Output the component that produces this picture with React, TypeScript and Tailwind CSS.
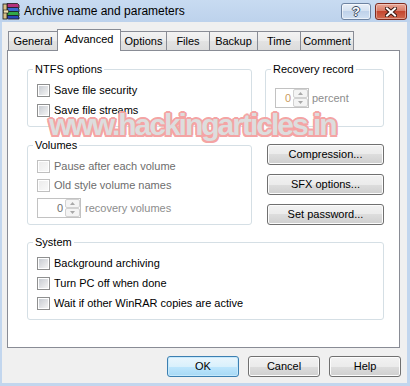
import React from 'react';

const btnCls =
  'flex items-center justify-center rounded-[3px] border border-[#707070] bg-[linear-gradient(#f2f2f2,#ebebeb_50%,#dddddd_50%,#cfcfcf)] shadow-[inset_0_0_0_1px_#fcfcfc] text-[11px] leading-[13px] text-black whitespace-nowrap';

function RarIcon() {
  return (
    <svg width="18" height="18" viewBox="0 0 18 18">
      <path d="M5 1.5 L15.5 1.5 L17 3 L17 6 L6.5 6 L5 4.5 Z" fill="#b4307a" stroke="#1a1a1a" strokeWidth="0.8" />
      <path d="M5 5.5 L15.5 5.5 L17 7 L17 10 L6.5 10 L5 8.5 Z" fill="#3a6ad0" stroke="#1a1a1a" strokeWidth="0.8" />
      <path d="M5 9.5 L15.5 9.5 L17 11 L17 14 L6.5 14 L5 12.5 Z" fill="#32a848" stroke="#1a1a1a" strokeWidth="0.8" />
      <path d="M5 13.5 L15.5 13.5 L17 15 L17 17 L6.5 17 L5 16 Z" fill="#2a48b8" stroke="#1a1a1a" strokeWidth="0.8" />
      <rect x="1" y="2" width="4" height="15" fill="#d8c088" stroke="#1a1a1a" strokeWidth="0.8" />
      <rect x="1.5" y="8" width="5" height="3" fill="#f0e0b0" stroke="#1a1a1a" strokeWidth="0.6" />
    </svg>
  );
}

function Check({ label, disabled }: { label: string; disabled?: boolean }) {
  return (
    <div className="flex items-center h-[13px]">
      <span
        className={`w-[13px] h-[13px] shrink-0 border p-[1px] bg-white ${
          disabled ? 'border-[#c0c0c0]' : 'border-[#8e8f8f]'
        }`}
      >
        <span
          className={`block w-full h-full ${
            disabled
              ? 'bg-[linear-gradient(135deg,#ececec,#f8f8f8)]'
              : 'bg-[linear-gradient(135deg,#c8ccd2,#f4f4f4)]'
          }`}
        />
      </span>
      <span
        className={`ml-[4px] text-[11px] leading-[13px] whitespace-nowrap ${
          disabled ? 'text-[#6d6d6d]' : 'text-black'
        }`}
      >
        {label}
      </span>
    </div>
  );
}

function Arrow({ up }: { up?: boolean }) {
  return (
    <svg width="5" height="3" viewBox="0 0 5 3">
      <path d={up ? 'M0 3 L2.5 0 L5 3 Z' : 'M0 0 L5 0 L2.5 3 Z'} fill="#a8a8a8" />
    </svg>
  );
}

function Spin({ wide, valueColor }: { wide?: boolean; valueColor: string }) {
  return (
    <div
      className={`flex h-[20px] border border-[#c2c2c2] bg-white ${wide ? 'w-[44px]' : 'w-[34px]'}`}
    >
      <span className={`flex-1 text-right pr-[2px] text-[11px] leading-[18px] ${valueColor}`}>0</span>
      <div className="w-[15px] flex flex-col">
        <div className="h-[9px] flex items-center justify-center border border-[#d2d2d2] rounded-[2px] bg-[#f4f4f4]">
          <Arrow up />
        </div>
        <div className="h-[9px] flex items-center justify-center border border-[#d2d2d2] rounded-[2px] bg-[#f4f4f4]">
          <Arrow />
        </div>
      </div>
    </div>
  );
}

function Group({
  title,
  className,
  children,
}: {
  title: string;
  className: string;
  children: React.ReactNode;
}) {
  return (
    <div className={`relative border border-[#d5dfe5] rounded-[3px] ${className}`}>
      <span className="absolute -top-[7px] left-[5px] px-[2px] bg-white text-[11px] leading-[13px] text-black whitespace-nowrap">
        {title}
      </span>
      {children}
    </div>
  );
}

const tabs = [
  { name: 'General', w: 'w-[50px]' },
  { name: 'Advanced', w: 'w-[64px]', active: true },
  { name: 'Options', w: 'w-[47px]' },
  { name: 'Files', w: 'w-[44px]' },
  { name: 'Backup', w: 'w-[49px]' },
  { name: 'Time', w: 'w-[44px]' },
  { name: 'Comment', w: 'w-[54px]' },
];

export default function App() {
  return (
    <div className="relative w-[410px] h-[386px] bg-[#c2d6ee] flex flex-col [font-family:'Liberation_Sans',Arial,sans-serif] overflow-hidden">
      {/* title bar */}
      <div className="h-[22px] flex items-start bg-[linear-gradient(#c8dbf1,#bdd2ec)]">
        <div className="ml-[2px] mt-[2px]">
          <RarIcon />
        </div>
        <span className="ml-[4px] text-[12px] leading-[22px] text-black">Archive name and parameters</span>
        <div className="ml-auto mt-[3px] w-[30px] h-[17px] rounded-[3px] border border-[#6d83a1] bg-[linear-gradient(#e8eff8,#d5e2f1_45%,#bfd2ea_50%,#d0e0f2)] shadow-[inset_0_0_0_1px_rgba(255,255,255,0.6)] flex items-center justify-center text-[13px] leading-[13px] font-bold text-white [text-shadow:1px_0_#3b4a60,-1px_0_#3b4a60,0_1px_#3b4a60,0_-1px_#3b4a60]">
          ?
        </div>
        <div className="ml-[4px] mr-[3px] mt-[3px] w-[32px] h-[17px] rounded-[3px] border border-[#7e2a1e] bg-[linear-gradient(#eaa898,#d87c68_45%,#c4462f_50%,#d06a50)] shadow-[inset_0_0_0_1px_rgba(255,255,255,0.35)] flex items-center justify-center">
          <svg width="12" height="10" viewBox="0 0 12 10">
            <path d="M2 1.5 L10 8.5 M10 1.5 L2 8.5" stroke="#3a1710" strokeWidth="4" strokeLinecap="square" />
            <path d="M2 1.5 L10 8.5 M10 1.5 L2 8.5" stroke="#ffffff" strokeWidth="2" strokeLinecap="square" />
          </svg>
        </div>
      </div>

      {/* body */}
      <div className="flex-1 ml-[2px] mr-[3px] mb-[3px] bg-[#f0f0f0] flex flex-col">
        {/* tabs */}
        <div className="pl-[6px] pt-[7px] h-[28px] flex items-end">
          {tabs.map((t, i) =>
            t.active ? (
              <div
                key={t.name}
                className={`relative z-10 -ml-px -mb-px h-[22px] ${t.w} border border-b-0 border-[#898c95] bg-white pt-[3px] text-center text-[11px] leading-[13px] text-black`}
              >
                {t.name}
              </div>
            ) : (
              <div
                key={t.name}
                className={`${i === 0 ? '' : '-ml-px'} h-[19px] ${t.w} border border-b-0 border-[#898c95] bg-[linear-gradient(#f3f3f3,#ebebeb_50%,#e3e3e3_50%,#dcdcdc)] pt-[3px] text-center text-[11px] leading-[13px] text-black`}
              >
                {t.name}
              </div>
            )
          )}
        </div>

        {/* panel */}
        <div className="ml-[5px] w-[393px] h-[298px] border border-[#898c95] bg-white pt-[18px] pl-[19px] flex flex-col">
          <div className="flex">
            <Group title="NTFS options" className="w-[225px] h-[58px] pt-[14px] pl-[9px] flex flex-col gap-[7px]">
              <Check label="Save file security" />
              <Check label="Save file streams" />
            </Group>
            <Group title="Recovery record" className="ml-[13px] w-[119px] h-[58px] pt-[18px] pl-[9px]">
              <div className="flex items-center">
                <Spin valueColor="text-[#c99a62]" />
                <span className="ml-[3px] text-[11px] leading-[13px] text-[#8d8d8d]">percent</span>
              </div>
            </Group>
          </div>

          <div className="flex mt-[18px]">
            <Group title="Volumes" className="w-[225px] h-[80px] pt-[14px] pl-[9px] flex flex-col gap-[6px]">
              <Check label="Pause after each volume" disabled />
              <Check label="Old style volume names" disabled />
              <div className="flex items-center">
                <Spin wide valueColor="text-[#6d6d6d]" />
                <span className="ml-[4px] text-[11px] leading-[13px] text-[#8d8d8d]">recovery volumes</span>
              </div>
            </Group>
            <div className="ml-[15px] -mt-px w-[117px] flex flex-col gap-[9px]">
              <div className={`${btnCls} h-[21px]`}>Compression...</div>
              <div className={`${btnCls} h-[21px]`}>SFX options...</div>
              <div className={`${btnCls} h-[21px]`}>Set password...</div>
            </div>
          </div>

          <Group title="System" className="mt-[17px] w-[357px] h-[78px] pt-[14px] pl-[9px] flex flex-col gap-[7px]">
            <Check label="Background archiving" />
            <Check label="Turn PC off when done" />
            <Check label="Wait if other WinRAR copies are active" />
          </Group>
        </div>

        {/* dialog buttons */}
        <div className="mt-[8px] pr-[6px] flex justify-end gap-[9px]">
          <div className="w-[72px] h-[21px] flex items-center justify-center rounded-[3px] border border-[#3c7fb1] bg-[linear-gradient(#eaf6fd,#d9f0fc_50%,#bee6fd_50%,#a7d9f5)] shadow-[inset_0_0_0_1px_#c6e9fc] text-[11px] leading-[13px] text-black">
            OK
          </div>
          <div className={`${btnCls} w-[72px] h-[21px]`}>Cancel</div>
          <div className={`${btnCls} w-[72px] h-[21px]`}>Help</div>
        </div>
      </div>

      {/* watermark */}
      <div className="pointer-events-none absolute left-[49px] top-[110px] z-20 whitespace-nowrap text-[30px] leading-[30px] font-bold tracking-[-2px] text-[#dddddd] [text-shadow:2px_0_#f4a4a4,-2px_0_#f4a4a4,0_2px_#f4a4a4,0_-2px_#f4a4a4,1.5px_1.5px_#f4a4a4,-1.5px_1.5px_#f4a4a4,1.5px_-1.5px_#f4a4a4,-1.5px_-1.5px_#f4a4a4]">
        www.hackingarticles.in
      </div>
    </div>
  );
}
